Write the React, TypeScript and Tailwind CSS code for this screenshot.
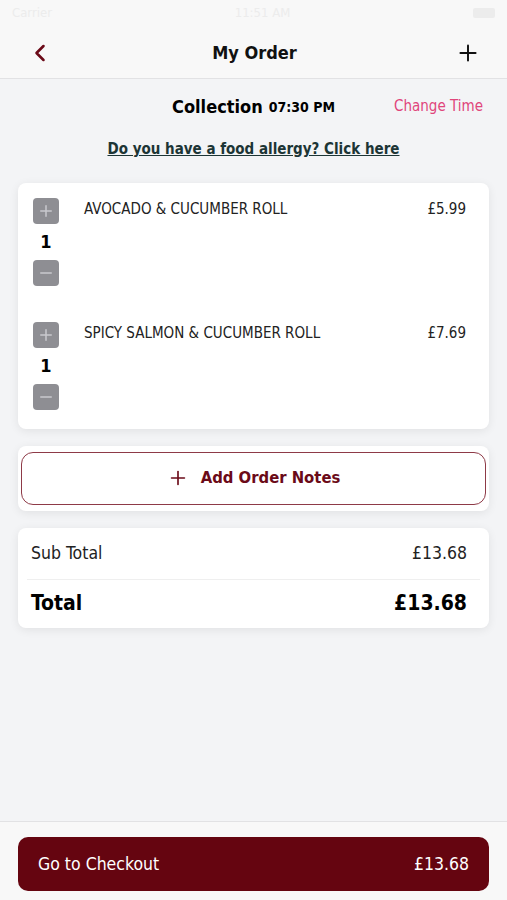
import { ChevronLeft, Plus, Minus } from "lucide-react";

const font = { fontFamily: '"Liberation Sans Narrow", "DejaVu Sans Condensed", "Liberation Sans", sans-serif' };

type Item = { name: string; price: string; qty: number };

const items: Item[] = [
  { name: "AVOCADO & CUCUMBER ROLL", price: "£5.99", qty: 1 },
  { name: "SPICY SALMON & CUCUMBER ROLL", price: "£7.69", qty: 1 },
];

function Stepper({ qty }: { qty: number }) {
  return (
    <div className="flex w-[26px] flex-col items-center">
      <button className="flex h-[26px] w-[26px] items-center justify-center rounded-[4px] bg-[#8e8e93] text-[#c9c9ce]">
        <Plus size={18} strokeWidth={2} />
      </button>
      <span className="flex h-[36px] items-center text-[18px] font-bold text-black">{qty}</span>
      <button className="flex h-[26px] w-[26px] items-center justify-center rounded-[4px] bg-[#8e8e93] text-[#c9c9ce]">
        <Minus size={18} strokeWidth={2} />
      </button>
    </div>
  );
}

function OrderRow({ item }: { item: Item }) {
  return (
    <div className="flex items-start pl-[15px] pr-[23px]">
      <Stepper qty={item.qty} />
      <div className="ml-[25px] flex flex-1 justify-between pt-[2px] text-[15px] leading-[18px] text-[#222]">
        <span>{item.name}</span>
        <span>{item.price}</span>
      </div>
    </div>
  );
}

export default function App() {
  return (
    <div style={font} className="flex h-[900px] w-[507px] flex-col bg-[#f3f4f6]">
      {/* status bar */}
      <div className="flex h-[25px] items-center justify-between bg-[#f8f8f8] px-[12px] text-[13px] text-[#ececec]">
        <span>Carrier</span>
        <span>11:51 AM</span>
        <span className="h-[10px] w-[22px] rounded-[2px] bg-[#ececec]" />
      </div>

      {/* header */}
      <div className="flex h-[54px] items-center justify-between border-b border-[#e2e2e4] bg-[#f8f8f8] px-[26px] pt-[2px]">
        <ChevronLeft size={28} strokeWidth={2.2} className="text-[#6b0a18]" />
        <h1 className="text-[18px] font-bold text-[#111]">My Order</h1>
        <Plus size={26} strokeWidth={1.8} className="text-[#111]" />
      </div>

      <div className="flex flex-1 flex-col">
        <div className="relative mt-[12px] flex h-[30px] items-center justify-center">
          <span className="text-[18px] font-bold text-black">Collection</span>
          <span className="ml-[6px] mt-[3px] text-[14px] font-bold text-black">07:30 PM</span>
          <span className="absolute right-[24px] text-[15px] text-[#e0457b]">Change Time</span>
        </div>

        <div className="mt-[17px] text-center text-[15px] font-bold text-[#1c3535] underline">
          Do you have a food allergy? Click here
        </div>

        {/* items card */}
        <div className="mx-[18px] mt-[22px] flex flex-col gap-[36px] rounded-[8px] bg-white pb-[19px] pt-[15px] shadow-[0_2px_10px_rgba(0,0,0,0.08)]">
          {items.map((it) => (
            <OrderRow key={it.name} item={it} />
          ))}
        </div>

        {/* order notes */}
        <div className="mx-[18px] mt-[17px] rounded-[8px] bg-white px-[3px] py-[6px] shadow-[0_2px_10px_rgba(0,0,0,0.08)]">
          <button className="flex h-[53px] w-full items-center justify-center gap-[12px] rounded-[12px] border-[1.5px] border-[#8e3a47] text-[16.5px] font-bold text-[#6b0a18]">
            <Plus size={22} strokeWidth={1.8} />
            Add Order Notes
          </button>
        </div>

        {/* totals */}
        <div className="mx-[18px] mt-[17px] rounded-[8px] bg-white px-[9px] shadow-[0_2px_10px_rgba(0,0,0,0.08)]">
          <div className="flex h-[52px] items-center justify-between border-b border-[#efefef] pl-[4px] pr-[13px] text-[17.5px] text-[#222]">
            <span>Sub Total</span>
            <span>£13.68</span>
          </div>
          <div className="flex h-[48px] items-center justify-between pl-[4px] pr-[13px] text-[21px] font-bold text-black">
            <span>Total</span>
            <span>£13.68</span>
          </div>
        </div>
      </div>

      {/* checkout */}
      <div className="h-[79px] border-t border-[#e2e2e4] bg-[#f8f8f8] px-[18px] pt-[15px]">
        <button className="flex h-[54px] w-full items-center justify-between rounded-[10px] bg-[#650510] px-[20px] text-[17.5px] text-white">
          <span>Go to Checkout</span>
          <span>£13.68</span>
        </button>
      </div>
    </div>
  );
}
